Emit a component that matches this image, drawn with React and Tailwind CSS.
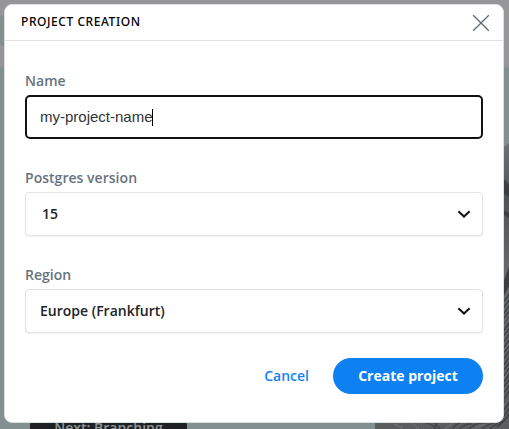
import React from "react";

function Chevron() {
  return (
    <svg width="14" height="10" viewBox="0 0 14 10" fill="none" stroke="#111417" strokeWidth="2">
      <path d="M1.4 2.3 L7 7.6 L12.6 2.3" />
    </svg>
  );
}

function Label({ children }) {
  return (
    <div className="h-5 text-[14px] leading-5 font-semibold tracking-[0.03px] text-[#68727d]">{children}</div>
  );
}

function Select({ value, indent }) {
  return (
    <div
      className={`mt-1 flex h-11 items-center justify-between rounded-[4px] border border-[#e1e3e5] bg-white pr-[11px] shadow-[0_1px_2px_rgba(0,0,0,0.06)] ${indent}`}
    >
      <span className="text-[14px] leading-5 font-semibold text-[#202428]">{value}</span>
      <Chevron />
    </div>
  );
}

function Photo() {
  const strands = Array.from({ length: 22 }, (_, i) => i);
  return (
    <svg width="134" height="299" viewBox="375 130 134 299" className="absolute right-0 bottom-0">
      <defs>
        <linearGradient id="shade" x1="0" y1="0" x2="0" y2="1">
          <stop offset="0" stopColor="#6c7274" />
          <stop offset="0.2" stopColor="#515355" />
          <stop offset="0.45" stopColor="#66686a" />
          <stop offset="1" stopColor="#5b5c5e" />
        </linearGradient>
      </defs>
      <path d="M375 429V418H490V160L504 147L509 143V429Z" fill="url(#shade)" />
      <path d="M503 178l6 7v12l-6-4zM503 210l6 3v5l-6-4zM503 283l6-16v19l-6 12z" fill="#3c3e40" />
      <g stroke="#393b3d" strokeWidth="1.2" fill="none">
        {strands.map((i) => (
          <path key={i} d={`M${497 + (i % 3)} ${307 + i * 5.7} Q505 ${302 + i * 5.7} 511 ${291 + i * 5.7}`} />
        ))}
      </g>
      <g stroke="#3d3f41" strokeWidth="1.1" fill="none">
        <path d="M421 422q12 1 16 8M433 421l8 9M443 420q-8 3-9 10M452 430q5-9 14-8M459 430q5-7 13-6M469 430q4-8 18-7M481 430q5-6 17-8M489 430q7-7 15-9" />
      </g>
      <g stroke="#818284" strokeWidth="0.7" fill="none">
        <path d="M394 424l9 4M411 422l8 7M445 429l8-6M474 429l11-5M504 325l5-7M504 350l5-6M503 380l6-9M504 405l5-8" />
      </g>
    </svg>
  );
}

export default function App() {
  return (
    <main className="relative h-[429px] w-[509px] overflow-hidden bg-[#829092] font-['Open_Sans',sans-serif]">
      <div className="h-[67px] bg-[#969698] pt-[15px]">
        <div className="h-[31px] w-[5px] rounded-l-[4px] bg-[#829092]" />
      </div>
      <Photo />
      <div className="absolute top-[415px] left-[30px] flex h-8 w-[157px] justify-center rounded-[10px] bg-[#1d2126] pt-[3px]">
        <span className="text-[14px] leading-5 font-semibold text-[#929496]">Next: Branching</span>
      </div>

      <section className="absolute top-1 left-1 flex h-[419px] w-[500px] flex-col rounded-[8px] border border-[#dcdfe2] bg-white">
        <header className="flex h-9 shrink-0 items-center justify-between border-b border-[#dfe2e5] pr-[13px] pl-4">
          <h1 className="relative -top-px font-['Noto_Sans',sans-serif] text-[12px] leading-4 font-medium tracking-[0.56px] text-black">
            PROJECT CREATION
          </h1>
          <svg width="18" height="18" viewBox="0 0 18 18" fill="none" stroke="#5d6873" strokeWidth="1.3">
            <path d="M1.2 1.2 L16.8 16.8 M16.8 1.2 L1.2 16.8" />
          </svg>
        </header>

        <div className="flex flex-col px-5 pt-[30px]">
          <Label>Name</Label>
          <div className="mt-1 flex h-11 items-center rounded-[5px] border-2 border-[#111214] pl-[13px] font-['Liberation_Sans',Arial,sans-serif]">
            <span className="text-[15px] leading-5 text-[#303439]">my-project-name</span>
            <span className="-ml-px h-[17px] w-px bg-black" />
          </div>
          <div className="h-[29px]" />
          <Label>Postgres version</Label>
          <Select value="15" indent="pl-4" />
          <div className="h-[29px]" />
          <Label>Region</Label>
          <Select value="Europe (Frankfurt)" indent="pl-[14px]" />
        </div>

        <footer className="mt-[25px] flex items-center justify-end pr-5">
          <button className="mr-6 text-[14px] leading-5 font-semibold text-[#1683f5]">Cancel</button>
          <button className="h-9 w-[150px] rounded-full bg-[#0d80f2] text-[14px] leading-5 font-bold text-white">
            Create project
          </button>
        </footer>
      </section>
    </main>
  );
}
